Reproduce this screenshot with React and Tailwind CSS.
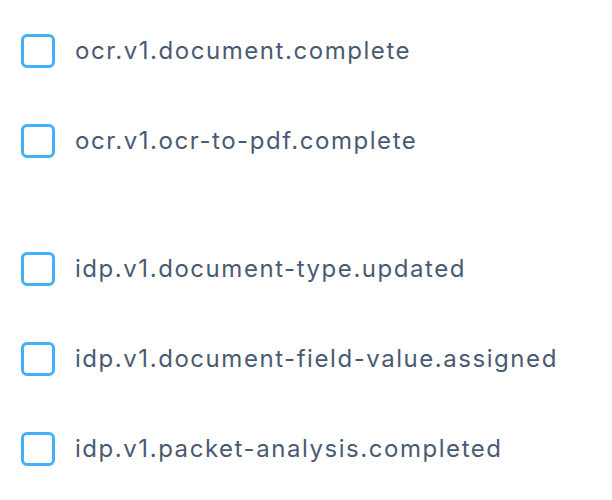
const groups = [
  ['ocr.v1.document.complete', 'ocr.v1.ocr-to-pdf.complete'],
  [
    'idp.v1.document-type.updated',
    'idp.v1.document-field-value.assigned',
    'idp.v1.packet-analysis.completed',
  ],
]

function EventRow({ label }) {
  return (
    <label className="flex items-center h-[34px] gap-[20px]">
      <span className="block w-[34px] h-[34px] shrink-0 rounded-[6px] border-[3px] border-[#45b0fa] bg-white" />
      <span className="text-[24px] text-[#4a5a72] tracking-[1.55px]">{label}</span>
    </label>
  )
}

export default function App() {
  return (
    <div className="w-[612px] h-[500px] bg-white pt-[34px] pl-[21px] font-['Inter',sans-serif] flex flex-col gap-[94px]">
      {groups.map((g, i) => (
        <div key={i} className="flex flex-col gap-[56px]">
          {g.map(e => <EventRow key={e} label={e} />)}
        </div>
      ))}
    </div>
  )
}
